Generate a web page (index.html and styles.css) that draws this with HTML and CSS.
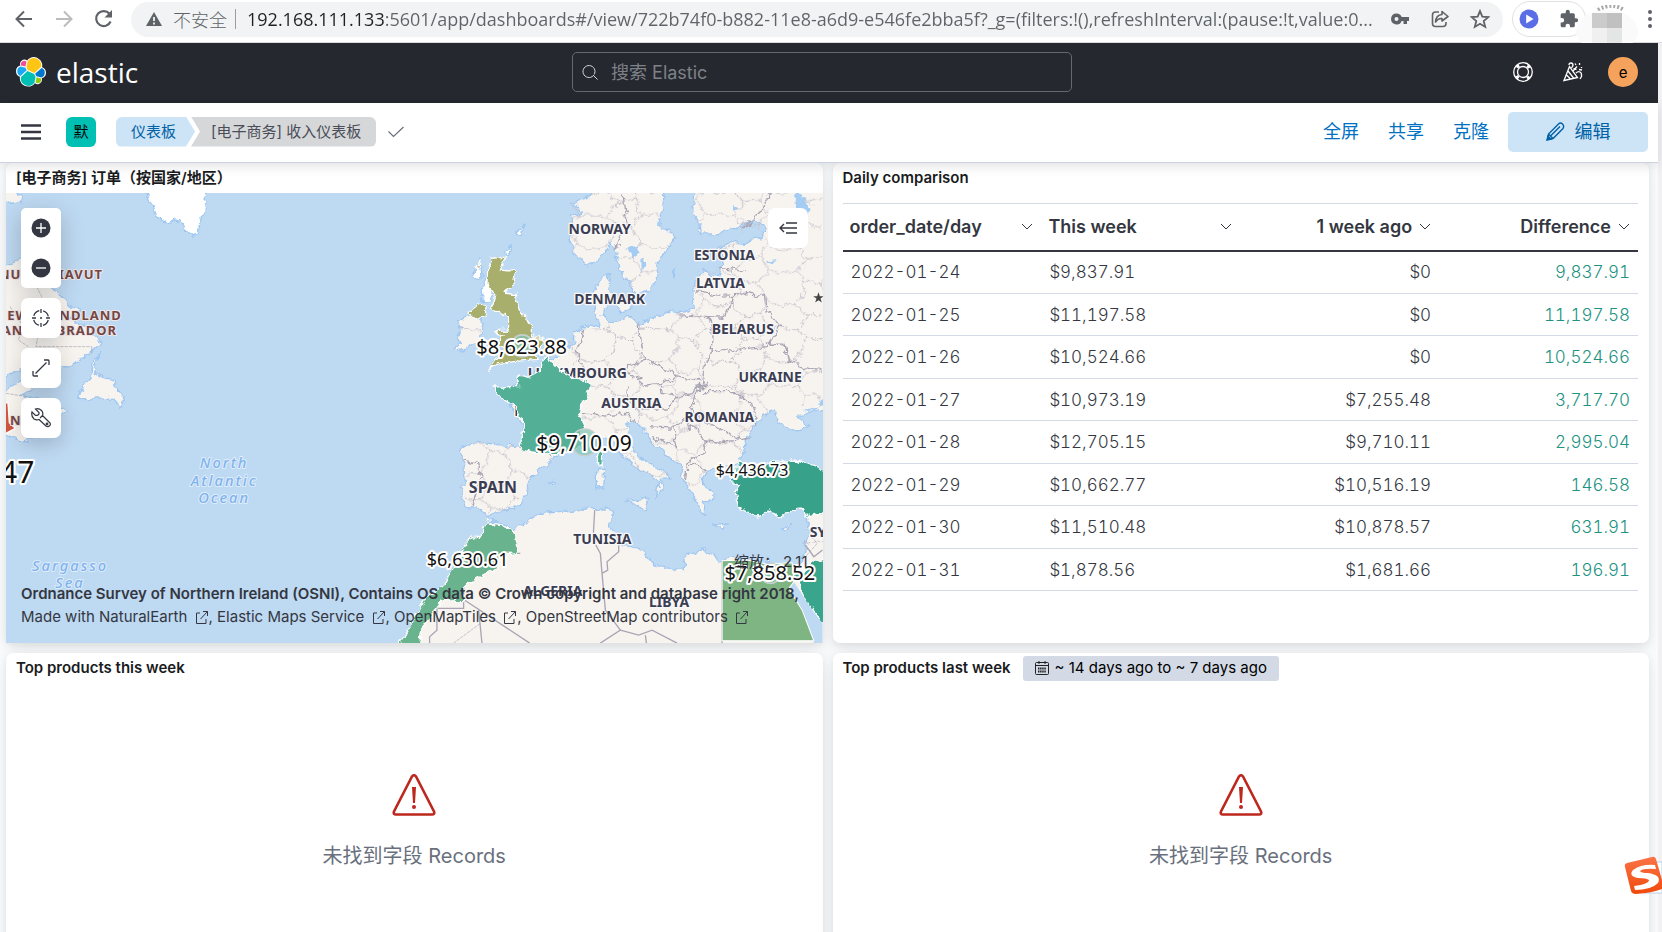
FILE: index.html
```html
<!DOCTYPE html>
<html lang="zh-CN">
<head>
    <meta charset="UTF-8">
    <meta name="viewport" content="width=device-width, initial-scale=1.0">
    <title>[电子商务] 收入仪表板 - Elastic</title>
    <link rel="stylesheet" href="styles.css">
</head>
<body>
    <!-- browser toolbar -->
    <div class="browser-bar">
        <button class="nav-btn" aria-label="后退"><svg width="18" height="18" viewBox="0 0 18 18"><path d="M17 9H2M9 1.500L1.500 9L9 16.500" fill="none" stroke="#5f6368" stroke-width="2"/></svg></button>
        <button class="nav-btn" aria-label="前进"><svg width="18" height="18" viewBox="0 0 18 18"><path d="M1 9H16M9 1.500L16.500 9L9 16.500" fill="none" stroke="#babcbe" stroke-width="2"/></svg></button>
        <button class="nav-btn" aria-label="刷新"><svg width="20" height="20" viewBox="0 0 20 20"><path d="M16.600 12.500A7.500 7.500 0 1 1 15.500 4.800" fill="none" stroke="#5f6368" stroke-width="2.200"/><path d="M18 1V8.500H10.500Z" fill="#5f6368"/></svg></button>
        <div class="omnibox">
            <svg width="16" height="16" viewBox="0 0 16 16"><path d="M8 1L16 15H0Z" fill="#5f6368"/><path d="M8 6V10M8 11.500V13.500" stroke="#f1f3f4" stroke-width="1.800"/></svg>
            <label for="url" class="insecure">不安全</label>
            <span class="divider"></span>
            <input id="url" class="url" type="text" value="192.168.111.133:5601/app/dashboards#/view/722b74f0-b882-11e8-a6d9-e546fe2bba5f?_g=(filters:!(),refreshInterval:(pause:!t,value:0...">
            <button class="box-btn" aria-label="密码"><svg width="18" height="12" viewBox="0 0 18 12"><path fill="#5f6368" fill-rule="evenodd" d="M5.500 0.500A5.500 5.500 0 1 0 10.700 8H12.500V11H16V8H18V4H10.700A5.500 5.500 0 0 0 5.500 .5ZM5.500 4A2 2 0 1 1 5.500 8A2 2 0 1 1 5.500 4Z"/></svg></button>
            <button class="box-btn" aria-label="分享"><svg width="18" height="18" viewBox="0 0 18 18" fill="none" stroke="#5f6368" stroke-width="1.600"><path d="M8 2H4.500Q1.500 2 1.500 5V13.500Q1.500 16.500 4.500 16.500H12Q15 16.500 15 13.500V12"/><path d="M11 1.500L17 6.500L11 11V8.500Q7 8 4.500 12Q5 5 11 4.500Z" stroke-linejoin="round"/></svg></button>
            <button class="box-btn" aria-label="收藏"><svg width="20" height="20" viewBox="0 0 20 20"><path d="M10 2L12.300 7.600L18.300 8.100L13.700 12L15.200 17.900L10 14.700L4.800 17.900L6.300 12L1.700 8.100L7.700 7.600Z" fill="none" stroke="#5f6368" stroke-width="1.800"/></svg></button>
        </div>
        <div class="extensions">
            <button class="box-btn" aria-label="播放"><svg width="20" height="20" viewBox="0 0 20 20"><circle cx="10" cy="10" r="9.500" fill="#5b6ee6"/><path d="M7.200 5.500L14.500 10L7.200 14.500Z" fill="#fff"/></svg></button>
            <button class="box-btn" aria-label="扩展程序"><svg width="20" height="20" viewBox="0 0 24 24"><path fill="#5f6368" d="M20.500 11H19V7a2 2 0 0 0-2-2h-4V3.500a2.500 2.500 0 0 0-5 0V5H4a2 2 0 0 0-2 2v3.800h1.500a2.700 2.700 0 0 1 0 5.400H2V20a2 2 0 0 0 2 2h3.800v-1.500a2.700 2.700 0 0 1 5.400 0V22H17a2 2 0 0 0 2-2v-4h1.500a2.500 2.500 0 0 0 0-5z"/></svg></button>
        </div>
        <svg class="profile" width="62" height="38" viewBox="0 0 62 38">
            <path d="M22 5Q36-3 48 5" fill="none" stroke="#a8a8a8" stroke-width="4" stroke-dasharray="2 2"/>
            <ellipse cx="31" cy="26" rx="31" ry="21" fill="#fafafa"/>
            <path fill="#cbcbcb" d="M16 8H31V23H16Z"/><path fill="#c0c0c0" d="M31 8H46V23H31Z"/><path fill="#f0f0f0" d="M16 23H31V38H16Z"/><path fill="#e4e6e5" d="M31 23H46V38H31Z"/>
        </svg>
        <button class="more-btn" aria-label="更多"><svg width="4" height="18" viewBox="0 0 4 18" fill="#5f6368"><circle cx="2" cy="2" r="2"/><circle cx="2" cy="9" r="2"/><circle cx="2" cy="16" r="2"/></svg></button>
    </div>

    <div class="kibana">
        <header class="top-header">
            <a class="logo" href="#">
                <svg width="30" height="30" viewBox="0 0 32 32">
                    <path fill="#fff" d="M32 16.770a6.334 6.334 0 0 0-1.140-3.630 6.269 6.269 0 0 0-3.020-2.290 9.044 9.044 0 0 0-3.460-8.850A8.890 8.890 0 0 0 19.180.010a8.960 8.960 0 0 0-7.290 3.780A4.716 4.716 0 0 0 4.600 9.130 6.307 6.307 0 0 0 .010 15.130a6.350 6.350 0 0 0 4.170 5.960 9.140 9.140 0 0 0 1.700 7.070 9.030 9.030 0 0 0 14.260-.130 4.708 4.708 0 0 0 7.280-5.260A6.315 6.315 0 0 0 32 16.770"/>
                    <path fill="#FEC514" d="M12.580 13.790l7.010 3.210 7.070-6.210A7.849 7.849 0 0 0 12.320 4.850L11.140 10.980z"/>
                    <path fill="#00BFB3" d="M5.330 21.220A7.954 7.954 0 0 0 19.710 27.190L20.880 21.060 19.320 18.060 12.280 14.840z"/>
                    <path fill="#F04E98" d="M5.290 9.070L10.090 10.210 11.140 4.740a3.790 3.790 0 0 0-5.850 4.330"/>
                    <path fill="#1BA9F5" d="M4.870 10.220A5.300 5.300 0 0 0 4.710 20.160L11.450 14.050 10.210 11.400z"/>
                    <path fill="#93C90E" d="M20.870 27.190a3.787 3.787 0 0 0 5.830-4.340L21.910 21.720z"/>
                    <path fill="#0077CC" d="M21.850 20.560L27.130 21.800A5.300 5.300 0 0 0 27.300 11.850L20.400 17.910z"/>
                </svg>
                <span class="logo-text">elastic</span>
            </a>
            <label class="search">
                <svg width="16" height="16" viewBox="0 0 16 16"><path d="M11.300 11.700A6 6 0 1 1 12.200 10.500M11 11L15.500 15.500" fill="none" stroke="#d4d7dc"/></svg>
                <input type="search" placeholder="搜索 Elastic" aria-label="搜索 Elastic">
            </label>
            <div class="header-right">
                <button class="header-btn" aria-label="帮助"><svg width="20" height="20" viewBox="0 0 20 20" fill="none" stroke="#fff"><circle cx="10" cy="10" r="9.300" stroke-width="1.300"/><circle cx="10" cy="10" r="5.500" stroke-width="1.300"/><path d="M10 2.500A7.500 7.500 0 0 1 10 17.500A7.500 7.500 0 0 1 10 2.500" stroke-width="3" stroke-dasharray="3 8.780" stroke-dashoffset="-4.500"/></svg></button>
                <button class="header-btn" aria-label="新功能"><svg width="20" height="20" viewBox="0 0 20 20" fill="none" stroke="#fff" stroke-width="1.300"><path d="M6.500 4.500L1 18.500L14.500 15.500ZM5 9L10.500 16M3.500 13L7.500 17"/><path d="M6 3Q6 1 8 1T10 3.500L8.500 6M10 9L14 4.500M10.500 6.500L13.500 7.500M13 11Q15 9 17 10T18.500 14.500L17 17M12 1.500L13 3M16.500 1V3M18.500 5V6M16 7.500L19 8"/></svg></button>
                <button class="avatar" aria-label="账户">e</button>
            </div>
        </header>

        <nav class="sub-header">
            <button class="menu-btn" aria-label="菜单"><svg width="20" height="16" viewBox="0 0 20 16"><path d="M0 1.500H20M0 8H20M0 14.500H20" stroke="#343741" stroke-width="2.400"/></svg></button>
            <button class="space">默</button>
            <div class="breadcrumbs">
                <a class="crumb crumb-first" href="#">仪表板</a>
                <span class="crumb crumb-last">[电子商务] 收入仪表板</span>
            </div>
            <svg class="check" width="16" height="12" viewBox="0 0 16 12"><path d="M.5 5.500L5.500 10.500L15.500 1" fill="none" stroke="#69707d" stroke-width="1.200"/></svg>
            <div class="actions">
                <a href="#">全屏</a>
                <a href="#">共享</a>
                <a href="#">克隆</a>
                <button class="edit-btn"><svg width="19" height="19" viewBox="0 0 19 19" fill="none" stroke="#0061a6" stroke-width="1.400"><path d="M1.500 17.500L2.500 12L12.500 2Q14.500 0 16.500 2T17 6.500L7 16.500Z"/><path d="M4.500 14L14 4.500M2.500 12L7 16.500"/><path d="M1 18L2 14L5 17Z" fill="#0061a6"/></svg>编辑</button>
            </div>
        </nav>

        <main class="dashboard">
            <section class="panel">
                <h2 class="panel-title">[电子商务] 订单（按国家/地区）</h2>
                <div class="map">
                    <svg class="map-canvas" viewBox="18 39 2448 1350" preserveAspectRatio="xMidYMid slice">
                        <defs>
                            <filter id="coast" x="-5%" y="-5%" width="110%" height="110%">
                                <feTurbulence type="fractalNoise" baseFrequency=".04" numOctaves="3" seed="4"/>
                                <feDisplacementMap in="SourceGraphic" scale="28" xChannelSelector="R" yChannelSelector="G"/>
                            </filter>
                            <pattern id="regions" width="190" height="170" patternUnits="userSpaceOnUse">
                                <path d="M0 40L45 30L70 0M45 30L80 70L50 110L0 105M80 70L130 60L150 20L190 40M150 20L140 0M130 60L155 105L190 105M155 105L120 140L140 170M120 140L75 130L50 110M75 130L70 170" fill="none" stroke="#bfbac5" stroke-width="3" stroke-dasharray="8 3"/>
                            </pattern>
                        </defs>
                        <!-- north america and greenland -->
                        <g class="land" filter="url(#coast)">
                            <path d="M0 20H45L68 70L45 62L0 70Z"/>
                            <path d="M0 262L40 252L65 230L120 290L165 330L200 370L240 390L215 420L270 445L305 490L270 522L240 535L210 560L150 560L60 570L0 605Z"/>
                            <path d="M0 640L60 605L110 620L65 645L120 660L200 690L150 730L80 785L0 760Z"/>
                            <path d="M300 520L285 560L300 590L345 600L350 630L372 650L365 682L340 655L232 652L250 620L275 590L280 545Z"/>
                            <path class="ice" d="M430 20L455 70L470 110L500 130L535 118L555 150L578 172L592 155L605 120L612 80L620 20Z"/>
                        </g>
                        <path class="border thin" d="M110 320L125 350L112 400L120 430L108 500H275V520M30 380L70 440L55 480L85 500M18 640L80 650"/>
                        <path fill="#d0563f" stroke="#fff" stroke-width="4" d="M10 670L24 668L28 728L46 745L10 764Z"/>

                        <g transform="translate(1200 0)">
                            <g class="land" filter="url(#coast)">
                                <path id="scandinavia" d="M575 20L565 50L515 70L545 95L512 110L520 130L505 165L515 200L530 235L565 255L595 240L615 215L635 185L645 215L655 250L670 290L690 320L700 348L750 330L768 290L775 235L805 205L825 175L800 150L775 130L785 100L792 20Z"/>
                                <path id="mainland" d="M885 20L880 90L895 130L900 165L940 165L985 150L1020 140L1060 120L1095 150L1080 172L1040 190L1000 188L950 205L965 240L955 290L930 285L905 275L885 300L880 340L885 385L840 400L815 395L770 405L720 435L690 410L650 425L625 430L605 405L625 365L640 345L622 320L630 278L600 305L583 335L585 390L600 440L560 435L545 450L520 460L520 490L505 500L485 525L440 540L380 600L300 640L350 700L370 760L355 800L260 790L210 785L185 805L190 850L195 905L180 930L190 980L225 985L245 990L262 1012L285 995L340 990L365 965L385 920L400 880L460 840L470 825L545 780L610 770L640 790L665 820L700 860L740 880L775 905L765 950L785 930L780 895L812 893L765 860L730 840L700 810L680 780L690 745L680 730L705 725L720 740L760 790L800 830L840 850L850 905L870 930L890 965L895 990L915 1000L915 970L945 948L915 925L905 900L925 870L985 860L1010 850L1030 820L1045 770L1060 740L1085 710L1120 690L1140 735L1195 755L1225 735L1190 710L1290 675V20Z"/>
                                <path d="M262 1020L345 1045L395 1015L430 1000L520 990L580 985L620 983L640 1000L630 1040L650 1085L730 1115L760 1150L820 1170L850 1170L860 1125L900 1105L960 1140L1000 1135L1100 1150L1130 1180L1200 1165L1215 1100L1225 1050L1220 1000L1290 980V1410H-10L60 1310L125 1230L170 1130L240 1070Z"/>
                                <path d="M205 410L170 420L185 450L165 465L180 490L160 505L180 512L240 490L248 440L240 415Z"/>
                                <path d="M640 365L690 360L695 390L660 395Z"/>
                                <path d="M680 960L745 955L735 992ZM588 870L610 867L607 922L588 925ZM935 1030L985 1036L960 1044ZM1140 1045L1172 1033L1155 1052ZM450 910L465 905L462 915ZM812 275L822 265L818 290Z"/>
                                <path class="ice" d="M350 155L368 130L362 172ZM310 215L332 195L325 230ZM225 275L240 235L245 290L215 295ZM245 330L262 280L275 360L250 365Z"/>
                            </g>
                            <g fill="url(#regions)" filter="url(#coast)">
                                <path d="M575 20L515 70L505 165L530 235L565 255L635 185L690 320L750 330L768 290L775 235L825 175L775 130L792 20ZM885 20L895 130L940 165L1095 150L1080 172L950 205L965 240L885 300L885 385L720 435L600 440L520 460L485 525L560 600L540 770L610 770L700 860L740 880L775 905L812 893L700 810L680 730L705 725L800 830L840 850L870 930L925 870L1010 850L1060 740L1120 690L1266 675V20ZM210 785L190 850L190 980L262 1012L340 990L400 880L460 840L355 800ZM1225 1000H1290V1100H1215ZM170 420H240V490H180Z"/>
                            </g>
                            <path class="lake" filter="url(#coast)" d="M680 205L715 195L720 220L695 235ZM720 250L738 235L722 280ZM995 75L1018 85L1005 100ZM1175 60L1200 40L1225 90L1215 115L1195 95ZM1095 245L1125 240L1115 255ZM1205 695L1290 665V640L1240 690Z"/>
                            <path class="border" filter="url(#coast)" d="M668 39L672 90L685 130L655 185L645 210M1110 39L1080 95L1030 145M955 262L1010 270L1030 275M885 335L970 348L1000 350L1035 340L1095 352L1100 390L1140 440L1100 500L1040 505L935 515M840 405L925 410L970 412L1000 350M925 410L938 460L935 515L910 570L905 620M715 425L722 480L730 540L675 565L700 590L735 615L780 610L830 590L900 600M735 540L780 560L830 590M550 450L530 520L545 560L545 600M780 615L785 640L830 650L880 640L920 600M685 625L690 670L730 690L800 690L830 650M1095 490L1150 490L1160 540L1210 560L1266 570M905 620L870 680L900 715L1020 780L1045 780M905 635L1010 635L1060 680L1065 735M915 780L980 785L1048 775M750 740L820 745L830 800L760 770M820 745L850 720L870 740L915 780L910 820L860 850L855 905M860 850L920 870M545 700L600 710L680 700L700 725M190 840L235 850L240 890L215 980M355 803L460 828"/>
                            <path class="border" d="M583 990L578 1080L600 1120L605 1180L615 1290L660 1350L600 1389M655 1095V1115L620 1145L622 1170L605 1180M350 1120L360 1120M190 1215V1285H110V1350L88 1370V1389M190 1258L388 1389M235 1290L245 1389M660 1350L715 1365L755 1350L830 1389M735 1365L738 1389M965 1145V1389M1215 1095L1240 1130L1266 1110"/>
                            <path class="border thin" d="M240 1330L160 1389M1225 1060L1250 1090L1215 1130"/>

                            <g class="label">
                                <text x="531" y="595">LUXEMBOURG</text>
                                <text x="342" y="707" text-anchor="start">FRANCE</text>
                            </g>
                            <!-- countries with orders -->
                            <g class="country" filter="url(#coast)">
                                <path fill="#a8ae6c" d="M275 235L320 232L300 270L347 275L340 310L315 340L345 345L360 390L390 430L390 470L428 475L420 500L400 520L414 538L340 545L300 550L262 572L290 535L320 505L290 495L305 470L290 452L325 450L325 410L275 385L285 350L260 320L262 270Z"/>
                                <path fill="#a8ae6c" d="M205 400L235 375L260 380L258 410L225 418ZM228 260L242 238L240 258Z"/>
                                <path fill="#52b097" d="M440 530L465 560L500 580L545 600L574 610L560 650L535 685L530 705L545 710L552 740L535 755L560 785L520 810L455 820L430 825L395 815L355 800L370 760L365 715L345 680L325 665L290 645L280 625L320 620L355 620L350 585L390 592L420 575L425 545Z"/>
                                <path fill="#52b097" d="M590 815L608 812L605 860L588 845Z"/>
                                <path fill="#38a189" d="M1010 842L1050 855L1120 850L1180 840L1230 855L1290 875V990L1225 1010L1215 990L1170 992L1140 1010L1100 990L1070 1008L1020 990L1005 940L1015 910L990 905L1005 880Z"/>
                                <path fill="#6ab38f" d="M262 1020L280 1035L340 1045L352 1120L300 1125L280 1170L190 1215L188 1258L130 1260L65 1340L55 1410H-15L40 1320L75 1260L130 1210L180 1130L205 1080L240 1068Z"/>
                                <path fill="#38a58c" d="M1245 1140L1290 1130V1360L1225 1275L1185 1190Z"/>
                            </g>
                            <path fill="#bed9f2" d="M1140 1205L1165 1225L1180 1205L1225 1275L1266 1330V1389H1240L1200 1285Z"/>
                            <path fill="#7fb583" stroke="#fff" stroke-width="3" d="M965 1142L1040 1140L1100 1152L1175 1148L1180 1205L1165 1225L1205 1290L1240 1382H965Z"/>
                            <g fill="#7cc4b2" fill-opacity=".7" stroke="#c5cfcc" stroke-width="5">
                                <circle cx="366" cy="498" r="33"/><circle cx="553" cy="787" r="40"/><circle cx="1110" cy="1180" r="30"/>
                            </g>

                            <g class="label">
                                <text x="598" y="162">NORWAY</text>
                                <text x="972" y="240">ESTONIA</text>
                                <text x="960" y="323">LATVIA</text>
                                <text x="628" y="372">DENMARK</text>
                                <text x="1027" y="461">BELARUS</text>
                                <text x="1109" y="607">UKRAINE</text>
                                <text x="693" y="685">AUSTRIA</text>
                                <text x="957" y="726">ROMANIA</text>
                                <text class="big" x="278" y="938">SPAIN</text>
                                <text x="606" y="1091">TUNISIA</text>
                                <text x="457" y="1249">ALGERIA</text>
                                <text x="806" y="1280">LIBYA</text>
                                <text x="1228" y="1072" text-anchor="start">SYRIA</text>
                            </g>
                            <path fill="#444" d="M1254 337L1258 349H1270L1260 356L1264 368L1254 361L1244 368L1248 356L1238 349H1250Z"/>
                            <g class="value">
                                <text class="v-60" x="364" y="522">$8,623.88</text>
                                <text class="v-63" x="551" y="812">$9,710.09</text>
                                <text class="v-48" x="1055" y="888">$4,436.73</text>
                                <text class="v-54" x="202" y="1158">$6,630.61</text>
                                <text class="v-60" x="1108" y="1200">$7,858.52</text>
                            </g>
                        </g>

                        <g class="province">
                            <text x="309" y="298">NUNATSIAVUT</text>
                            <text x="365" y="420">NEWFOUNDLAND</text>
                            <text x="351" y="465">AND LABRADOR</text>
                            <text class="from-left" x="30" y="735">NEW</text>
                        </g>
                        <g class="sea">
                            <text x="672" y="865">North</text>
                            <text x="672" y="917">Atlantic</text>
                            <text x="672" y="968">Ocean</text>
                            <text x="210" y="1173">Sargasso</text>
                            <text x="210" y="1224">Sea</text>
                        </g>
                        <g class="value"><text class="v-90" x="103" y="909">47</text></g>
                    </svg>

                    <div class="map-tools">
                        <div class="tool-group">
                            <button class="tool" aria-label="放大"><svg width="20" height="20" viewBox="0 0 20 20"><circle cx="10" cy="10" r="9.500" fill="#343741"/><path d="M5 10H15M10 5V15" stroke="#fff" stroke-width="1.300"/></svg></button>
                            <button class="tool" aria-label="缩小"><svg width="20" height="20" viewBox="0 0 20 20"><circle cx="10" cy="10" r="9.500" fill="#343741"/><path d="M5 10H15" stroke="#fff" stroke-width="1.300"/></svg></button>
                        </div>
                        <button class="tool" aria-label="适应数据边界"><svg width="18" height="18" viewBox="0 0 18 18" fill="none" stroke="#343741" stroke-width="1.300"><circle cx="9" cy="9" r="7.500" stroke-dasharray="7.780 4" stroke-dashoffset="-2"/><path d="M9 0V4M9 14V18M0 9H4M14 9H18"/><circle cx="9" cy="9" r="1" fill="#343741" stroke="none"/></svg></button>
                        <button class="tool" aria-label="全图"><svg width="18" height="18" viewBox="0 0 18 18" fill="none" stroke="#343741" stroke-width="1.300"><path d="M3.500 14.500L14.500 3.500M12 1H16Q17 1 17 2V6M1 12V16Q1 17 2 17H6"/></svg></button>
                        <button class="tool" aria-label="工具"><svg width="20" height="20" viewBox="0 0 20 20" fill="none" stroke="#343741" stroke-width="1.200"><path d="M4.500 1L8 4.500Q8.500 7.500 4.500 7.500L1 4Q0 8.500 3 11Q5.500 12.500 8 11.500L15 18Q17 19.500 18.700 17.700T18 14L11.500 7.500Q12.500 4.500 10.500 2.500Q8 0 4.500 1ZM9 10L12 7"/><circle cx="16" cy="16" r=".8"/></svg></button>
                    </div>
                    <button class="tool legend-btn" aria-label="展开图层"><svg width="18" height="12" viewBox="0 0 18 12" fill="none" stroke="#343741" stroke-width="1.400"><path d="M7 1H18M1 6H18M7 11H18M5 2L1 6L5 10"/></svg></button>
                    <div class="zoom-level">缩放： 2.11</div>
                    <div class="attribution">
                        <strong>Ordnance Survey of Northern Ireland (OSNI), Contains OS data © Crown copyright and database right 2018,</strong>
                        <div><a href="#">Made with NaturalEarth <svg class="ext" viewBox="0 0 13 13"><path d="M5 2H1.500V12.500H11V8M8 .5H12.500V5M12.500 .5L5.500 8"/></svg></a>, <a href="#">Elastic Maps Service <svg class="ext" viewBox="0 0 13 13"><path d="M5 2H1.500V12.500H11V8M8 .5H12.500V5M12.500 .5L5.500 8"/></svg></a>, <a href="#">OpenMapTiles <svg class="ext" viewBox="0 0 13 13"><path d="M5 2H1.500V12.500H11V8M8 .5H12.500V5M12.500 .5L5.500 8"/></svg></a>, <a href="#">OpenStreetMap contributors <svg class="ext" viewBox="0 0 13 13"><path d="M5 2H1.500V12.500H11V8M8 .5H12.500V5M12.500 .5L5.500 8"/></svg></a></div>
                    </div>
                </div>
            </section>

            <section class="panel">
                <h2 class="panel-title">Daily comparison</h2>
                <table class="data">
                    <thead>
                        <tr>
                            <th><div class="th-inner">order_date/day <svg class="chev" viewBox="0 0 12 8"><path d="M1 1L6 6L11 1"/></svg></div></th>
                            <th><div class="th-inner">This week <svg class="chev" viewBox="0 0 12 8"><path d="M1 1L6 6L11 1"/></svg></div></th>
                            <th><div class="th-inner num">1 week ago <svg class="chev" viewBox="0 0 12 8"><path d="M1 1L6 6L11 1"/></svg></div></th>
                            <th><div class="th-inner num">Difference <svg class="chev" viewBox="0 0 12 8"><path d="M1 1L6 6L11 1"/></svg></div></th>
                        </tr>
                    </thead>
                    <tbody>
                        <tr><td>2022-01-24</td><td>$9,837.91</td><td>$0</td><td>9,837.91</td></tr>
                        <tr><td>2022-01-25</td><td>$11,197.58</td><td>$0</td><td>11,197.58</td></tr>
                        <tr><td>2022-01-26</td><td>$10,524.66</td><td>$0</td><td>10,524.66</td></tr>
                        <tr><td>2022-01-27</td><td>$10,973.19</td><td>$7,255.48</td><td>3,717.70</td></tr>
                        <tr><td>2022-01-28</td><td>$12,705.15</td><td>$9,710.11</td><td>2,995.04</td></tr>
                        <tr><td>2022-01-29</td><td>$10,662.77</td><td>$10,516.19</td><td>146.58</td></tr>
                        <tr><td>2022-01-30</td><td>$11,510.48</td><td>$10,878.57</td><td>631.91</td></tr>
                        <tr><td>2022-01-31</td><td>$1,878.56</td><td>$1,681.66</td><td>196.91</td></tr>
                    </tbody>
                </table>
            </section>

            <section class="panel">
                <h2 class="panel-title">Top products this week</h2>
                <div class="error">
                    <svg width="44" height="42" viewBox="0 0 44 42"><path d="M20 2.500Q22 0 24 2.500L42 37.500Q43 40.500 40 40.500H4Q1 40.500 2 37.500Z" fill="none" stroke="#bd271e" stroke-width="2.600"/><path d="M20 13H24L23 29H21Z" fill="#bd271e"/><circle cx="22" cy="33" r="2" fill="#bd271e"/></svg>
                    <p>未找到字段 Records</p>
                </div>
            </section>

            <section class="panel">
                <h2 class="panel-title">Top products last week
                    <button class="badge"><svg width="14" height="14" viewBox="0 0 14 14" fill="none" stroke="#222"><path d="M.5 2.500Q.5 1.500 1.500 1.500H12.500Q13.500 1.500 13.500 2.500V12.500Q13.500 13.500 12.500 13.500H1.500Q.5 13.500 .5 12.500ZM.5 4.500H13.500M4 0V3M10 0V3"/><path d="M3 7.500H11M3 10.500H11" stroke-width="2" stroke-dasharray="1.500 .6"/></svg>~ 14 days ago to ~ 7 days ago</button>
                </h2>
                <div class="error">
                    <svg width="44" height="42" viewBox="0 0 44 42"><path d="M20 2.500Q22 0 24 2.500L42 37.500Q43 40.500 40 40.500H4Q1 40.500 2 37.500Z" fill="none" stroke="#bd271e" stroke-width="2.600"/><path d="M20 13H24L23 29H21Z" fill="#bd271e"/><circle cx="22" cy="33" r="2" fill="#bd271e"/></svg>
                    <p>未找到字段 Records</p>
                </div>
            </section>
        </main>
    </div>

    <!-- input method badge on the desktop edge -->
    <svg class="ime" width="38" height="40" viewBox="0 0 38 40">
        <defs><linearGradient id="ime-bg" x1="0" y1="0" x2="0" y2="1"><stop offset="0" stop-color="#fa7347"/><stop offset="1" stop-color="#f04a0c"/></linearGradient></defs>
        <path d="M30 6H38V37H20Z" fill="#fff" stroke="#b9cfe8"/>
        <path d="M3 7L28 1Q31 0 32 3L38 24V33Q28 37 12 38Q8 38 7 35L1 11Q0 8 3 7Z" fill="url(#ime-bg)"/>
        <path d="M31 9Q17 8 9 14Q4 20 14 22Q23 22 25 24Q25 28 10 30L11 34Q27 34 34 27Q38 19 24 17Q17 17 16 15Q19 12 32 13Z" fill="#fff"/>
    </svg>
</body>
</html>
```
FILE: styles.css
```css
* {
    box-sizing: border-box;
}
body {
    margin: 0;
    height: 100vh;
    overflow: hidden;
    display: flex;
    flex-direction: column;
    background: #f1f1f4;
    color: #343741;
    font-family: Inter, "Noto Sans CJK SC", sans-serif;
    font-size: 18px;
}
button {
    margin: 0;
    padding: 0;
    border: 0;
    background: none;
    font: inherit;
    color: inherit;
    cursor: pointer;
}
a {
    text-decoration: none;
    color: inherit;
}
svg {
    flex: none;
}

/* browser toolbar */
.browser-bar {
    display: flex;
    align-items: center;
    height: 43px;
    padding: 0 10px 4px 14px;
    background: #fff;
    border-bottom: 1px solid #dadce0;
}
.nav-btn {
    display: flex;
    justify-content: center;
    width: 20px;
    margin-right: 20px;
}
.omnibox {
    flex: 1;
    display: flex;
    align-items: center;
    height: 35px;
    margin-right: 9px;
    margin-left: -3px;
    padding: 0 13px 0 15px;
    border-radius: 18px;
    background: #f1f3f4;
    color: #5f6368;
}
.insecure {
    margin-left: 11px;
    font-weight: 300;
}
.divider {
    width: 1px;
    height: 20px;
    margin: 0 11px 0 8px;
    background: #9a9da1;
}
.url {
    flex: 1;
    min-width: 0;
    height: 30px;
    margin-right: -8px;
    padding: 0;
    border: 0;
    outline: 0;
    color: transparent;
    background: linear-gradient(90deg, #202124 137px, #5f6368 137px);
    background-clip: text;
    -webkit-background-clip: text;
    font-family: "Open Sans", sans-serif;
    font-size: 18px;
}
.box-btn {
    display: flex;
    justify-content: center;
    width: 20px;
    margin-left: 20px;
}
.extensions {
    display: flex;
    align-items: center;
    width: 74px;
    height: 36px;
    border: 1px solid #dfe1e5;
    border-radius: 18px;
}
.extensions .box-btn {
    margin-left: 0;
    margin-right: 20px;
}
.extensions .box-btn:first-child {
    margin-left: 6px;
}
.profile {
    align-self: flex-start;
    margin: 5px 10px 0 -10px;
}
.more-btn {
    display: flex;
}

/* kibana chrome */
.kibana {
    flex: 1;
    min-height: 0;
    display: flex;
    flex-direction: column;
    margin-right: 4px;
    background: #fafbfd;
}
.top-header {
    flex: none;
    display: grid;
    grid-template-columns: 1fr 500px 1fr;
    align-items: center;
    height: 60px;
    padding: 0 30px 2px 16px;
    background: #25282f;
}
.logo {
    display: flex;
    align-items: center;
    gap: 10px;
    color: #fff;
}
.logo-text {
    font-family: "Open Sans", sans-serif;
    font-size: 28px;
    line-height: 30px;
}
.search {
    display: flex;
    align-items: center;
    height: 40px;
    padding-left: 9px;
    border: 1px solid #65686e;
    border-radius: 5px;
}
.search input {
    flex: 1;
    margin-left: 13px;
    padding: 0;
    border: 0;
    outline: 0;
    background: none;
    color: #fff;
    font: inherit;
}
.search input::placeholder {
    color: #7e8188;
}
.header-right {
    display: flex;
    align-items: center;
    justify-content: flex-end;
    gap: 30px;
    margin-right: -10px;
}
.header-btn {
    display: flex;
}
.avatar {
    width: 30px;
    height: 30px;
    margin-left: -5px;
    border-radius: 50%;
    background: #f5a35c;
    color: #000;
    font-size: 15px;
}
.sub-header {
    position: relative;
    flex: none;
    display: flex;
    align-items: center;
    height: 60px;
    padding: 0 10px 2px 21px;
    background: #fff;
    border-bottom: 1px solid #cbd3e2;
    box-shadow: 0 3px 12px rgba(0, 0, 0, 0.12);
}
.menu-btn {
    display: flex;
}
.space {
    width: 30px;
    height: 30px;
    margin: 0 20px 0 25px;
    border-radius: 6px;
    background: #00bfb3;
    color: #000;
    font-size: 15px;
    line-height: 28px;
}
.breadcrumbs {
    display: flex;
    font-size: 15px;
    line-height: 30px;
}
.crumb-first {
    padding: 0 19px 0 15px;
    border-radius: 6px 0 0 6px;
    background: #cce4f5;
    color: #0061a6;
    clip-path: polygon(0 0, calc(100% - 9px) 0, 100% 50%, calc(100% - 9px) 100%, 0 100%);
}
.crumb-last {
    margin-left: -4px;
    padding: 0 15px 0 20px;
    border-radius: 0 6px 6px 0;
    background: #d6d7d9;
    color: #4a4d57;
    clip-path: polygon(0 0, 100% 0, 100% 100%, 0 100%, 9px 50%);
}
.check {
    margin-left: 12px;
}
.actions {
    display: flex;
    align-items: center;
    gap: 29px;
    margin-left: auto;
    color: #0071c2;
    line-height: 24px;
}
.edit-btn {
    display: flex;
    align-items: center;
    justify-content: center;
    gap: 10px;
    width: 140px;
    height: 40px;
    margin-left: -10px;
    border-radius: 5px;
    background: #cce4f5;
    color: #0061a6;
}

/* dashboard */
.dashboard {
    flex: 1;
    min-height: 0;
    overflow: hidden;
    display: grid;
    grid-template-columns: 1fr 1fr;
    grid-auto-rows: 480px;
    gap: 10px;
    padding: 0 9px 0 6px;
}
.panel {
    display: flex;
    flex-direction: column;
    min-width: 0;
    border-radius: 7px;
    background: #fff;
    box-shadow: 0 3px 9px rgba(0, 0, 0, 0.09), 0 9px 24px rgba(0, 0, 0, 0.05);
}
.panel-title {
    display: flex;
    align-items: center;
    height: 30px;
    margin: 0;
    padding: 0 10px;
    color: #1a1c21;
    font-size: 15px;
    font-weight: 600;
    line-height: 20px;
}
.badge {
    display: flex;
    align-items: center;
    gap: 6px;
    height: 25px;
    margin-left: 12px;
    padding: 0 12px;
    border-radius: 3px;
    background: #d3dae6;
    color: #000;
    font-weight: 400;
}

/* map */
.map {
    position: relative;
    flex: 1;
    min-height: 0;
    overflow: hidden;
    background: #bed9f2;
}
.map-canvas {
    display: block;
    width: 100%;
    height: 100%;
    font-family: "Noto Sans", sans-serif;
}
.land {
    fill: #f7f4f0;
    stroke: #9fc7f1;
    stroke-width: 4px;
}
.ice {
    fill: #fff;
}
.lake {
    fill: #a5ccf3;
}
.border {
    fill: none;
    stroke: #a9a5b4;
    stroke-width: 4px;
}
.thin {
    stroke-width: 2px;
    stroke-dasharray: 10px 3px;
}
.country {
    stroke: #fff;
    stroke-width: 4px;
}
.label, .value, .province, .sea {
    paint-order: stroke;
    stroke-linejoin: round;
    text-anchor: middle;
}
.label {
    fill: #3c3d50;
    stroke: #f8f8fa;
    stroke-width: 8px;
    font-size: 42px;
    font-weight: 700;
}
.label .big {
    font-size: 48px;
}
.value {
    fill: #111;
    stroke: #fff;
    stroke-width: 12px;
}
.v-48 {
    font-size: 48px;
}
.v-54 {
    font-size: 54px;
}
.v-60 {
    font-size: 60px;
}
.v-63 {
    font-size: 63px;
}
.v-90 {
    font-size: 90px;
    text-anchor: end;
}
.province {
    fill: #744746;
    stroke: #efe6e6;
    stroke-width: 6px;
    font-size: 39px;
    font-weight: 700;
    letter-spacing: 3px;
    text-anchor: end;
}
.from-left {
    text-anchor: start;
}
.sea {
    fill: #7fb3ee;
    stroke: #e0edfa;
    stroke-width: 6px;
    font-size: 44px;
    font-style: italic;
    font-weight: 500;
    letter-spacing: 6px;
}
.map-tools {
    position: absolute;
    top: 15px;
    left: 15px;
    display: flex;
    flex-direction: column;
    gap: 10px;
}
.tool-group {
    display: flex;
    flex-direction: column;
    border-radius: 5px;
    background: #fff;
    box-shadow: 0 6px 24px rgba(0, 0, 0, 0.2);
}
.tool {
    display: flex;
    align-items: center;
    justify-content: center;
    width: 40px;
    height: 40px;
    border-radius: 7px;
    background: #fff;
}
.map-tools > .tool {
    box-shadow: 0 6px 20px rgba(0, 0, 0, 0.18);
}
.legend-btn {
    position: absolute;
    top: 15px;
    right: 15px;
}
.zoom-level {
    position: absolute;
    right: 15px;
    bottom: 71px;
    font-size: 15px;
    line-height: 20px;
}
.attribution {
    position: absolute;
    left: 15px;
    bottom: 15px;
    font-size: 15px;
    line-height: 23px;
    white-space: nowrap;
}
.attribution strong {
    font-weight: 600;
}
.ext {
    width: 13px;
    height: 13px;
    margin-left: 3px;
    margin-right: 1px;
    vertical-align: -2px;
    fill: none;
    stroke: #343741;
}

/* data table */
.data {
    margin: 10px 11px 0 10px;
    border-collapse: collapse;
    table-layout: fixed;
}
.data th {
    width: 25%;
    height: 47px;
    padding: 0 8px 0 7px;
    border-top: 1px solid #d3dae6;
    border-bottom: 2px solid #343741;
    font-weight: 600;
}
.th-inner {
    display: flex;
    align-items: center;
    justify-content: space-between;
}
.th-inner.num {
    justify-content: flex-end;
    gap: 7px;
}
.chev {
    width: 12px;
    height: 8px;
    fill: none;
    stroke: #343741;
}
.data td {
    height: 43px;
    padding: 0 8px;
    border-bottom: 1px solid #d3dae6;
    font-size: 17px;
    font-weight: 300;
    font-feature-settings: "tnum";
}
.data tr:nth-child(even) td {
    height: 42px;
}
.data td:nth-child(n + 3) {
    text-align: right;
}
.data td:last-child {
    color: #209280;
}

/* empty panels */
.error {
    display: flex;
    flex-direction: column;
    align-items: center;
    gap: 24px;
    padding-top: 91px;
    color: #69707d;
    font-size: 20px;
    line-height: 32px;
}
.error p {
    margin: 0;
}

.ime {
    position: fixed;
    right: 0;
    bottom: 36px;
}
```
